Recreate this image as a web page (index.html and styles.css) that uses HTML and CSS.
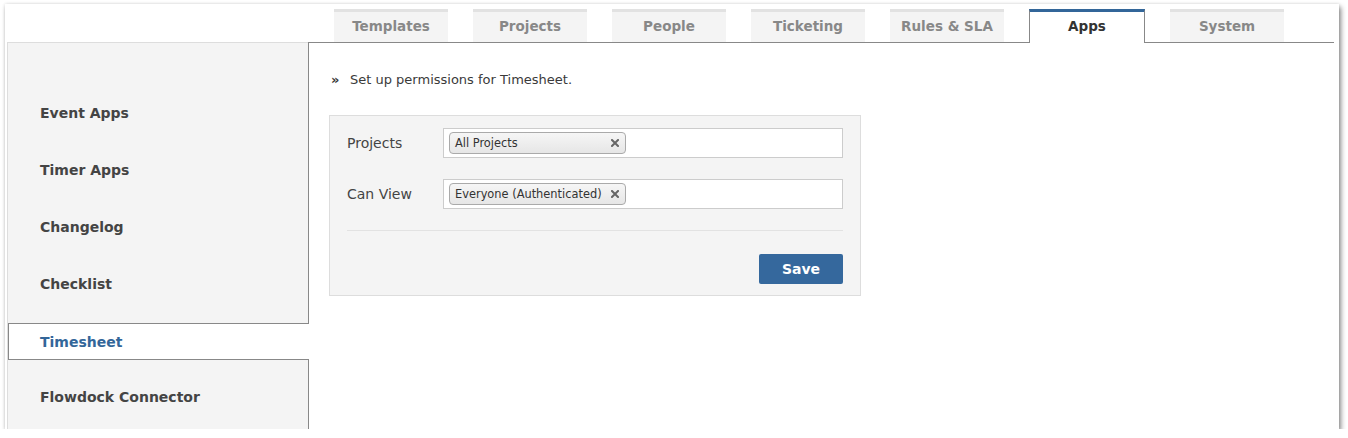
FILE: index.html
```html
<!DOCTYPE html>
<html lang="en">
<head>
<meta charset="utf-8">
<title>Apps - Timesheet</title>
<link rel="stylesheet" href="styles.css">
</head>
<body>
<div class="frame">
  <nav class="tabs">
    <div class="tab">Templates</div>
    <div class="tab">Projects</div>
    <div class="tab">People</div>
    <div class="tab">Ticketing</div>
    <div class="tab">Rules &amp; SLA</div>
    <div class="tab active">Apps</div>
    <div class="tab">System</div>
  </nav>
  <div class="main">
    <aside class="sidebar">
      <div class="side-item">Event Apps</div>
      <div class="side-item">Timer Apps</div>
      <div class="side-item">Changelog</div>
      <div class="side-item">Checklist</div>
      <div class="side-item active">Timesheet</div>
      <div class="side-item">Flowdock Connector</div>
    </aside>
    <section class="content">
      <p class="intro"><span class="raquo">»</span>Set up permissions for Timesheet.</p>
      <div class="panel">
        <div class="row">
          <label class="label">Projects</label>
          <div class="input">
            <span class="tag">All Projects<svg class="x" width="8" height="8" viewBox="0 0 8 8"><path d="M1 1L7 7M7 1L1 7" stroke="#666" stroke-width="2" stroke-linecap="square"/></svg></span>
          </div>
        </div>
        <div class="row">
          <label class="label">Can View</label>
          <div class="input">
            <span class="tag">Everyone (Authenticated)<svg class="x" width="8" height="8" viewBox="0 0 8 8"><path d="M1 1L7 7M7 1L1 7" stroke="#666" stroke-width="2" stroke-linecap="square"/></svg></span>
          </div>
        </div>
        <div class="divider"></div>
        <div class="actions">
          <button class="btn">Save</button>
        </div>
      </div>
    </section>
  </div>
</div>
</body>
</html>
```
FILE: styles.css
```css
* { box-sizing: border-box; }

body {
  margin: 0;
  background: #fff;
  font-family: "DejaVu Sans", Verdana, sans-serif;
}

.frame {
  margin: 4px 0 0 5px;
  width: 1334px;
  height: 425px;
  background: #fff;
  box-shadow: 2px 3px 5px rgba(0, 0, 0, 0.45), 0 0 3px rgba(0, 0, 0, 0.12);
  display: flex;
  flex-direction: column;
}

.tabs {
  display: flex;
  gap: 25px;
  height: 38px;
  padding: 5px 0 0 329px;
  align-items: flex-start;
}

.tab {
  width: 114px;
  height: 33px;
  border-top: 3px solid #e2e2e2;
  background: #f4f4f4;
  color: #888;
  font-weight: bold;
  font-size: 13.5px;
  line-height: 29px;
  text-align: center;
}

.tab.active {
  width: 116px;
  height: 34px;
  border-top-color: #336699;
  border-left: 1px solid #888;
  border-right: 1px solid #888;
  background: #fff;
  color: #333;
  position: relative;
  z-index: 1;
}

.main {
  display: flex;
  flex: 1;
  padding-left: 2px;
}

.sidebar {
  width: 301px;
  border-left: 1px solid #ddd;
  border-top: 1px solid #ddd;
  background: #f4f4f4;
  padding-top: 42px;
}

.side-item {
  height: 57px;
  line-height: 57px;
  padding-left: 32px;
  font-weight: bold;
  font-size: 14px;
  color: #444;
  white-space: nowrap;
}

.side-item.active {
  height: 37px;
  line-height: 33px;
  padding-top: 2px;
  padding-left: 31px;
  margin: 10px -1px 9px 0;
  border: 1px solid #888;
  border-right: none;
  background: #fff;
  color: #336699;
  position: relative;
  z-index: 1;
}

.content {
  width: 1026px;
  border-left: 1px solid #888;
  border-top: 1px solid #888;
  padding: 28px 20px 20px;
}

.intro {
  margin: 0;
  padding-left: 2px;
  font-size: 13px;
  line-height: 18px;
  color: #3a3a3a;
}

.raquo {
  display: inline-block;
  width: 19px;
  font-weight: bold;
}

.panel {
  margin-top: 26px;
  width: 532px;
  border: 1px solid #ddd;
  background: #f4f4f4;
  padding: 12px 17px 11px 17px;
}

.row {
  display: flex;
  align-items: center;
  height: 30px;
  margin-bottom: 21px;
}

.label {
  width: 96px;
  font-size: 14px;
  color: #444;
}

.input {
  width: 400px;
  height: 30px;
  border: 1px solid #ccc;
  background: #fff;
  padding: 3px 5px;
}

.tag {
  display: flex;
  align-items: center;
  width: 177px;
  height: 22px;
  border: 1px solid #aaa;
  border-radius: 4px;
  background: linear-gradient(#f6f6f6, #e6e6e6);
  padding-left: 5px;
  font-size: 11.4px;
  color: #333;
  white-space: nowrap;
}

.x {
  margin-left: auto;
  margin-right: 6px;
  flex: none;
}

.divider {
  border-top: 1px solid #e2e2e2;
  margin-bottom: 23px;
}

.actions {
  display: flex;
  justify-content: flex-end;
}

.btn {
  width: 84px;
  height: 30px;
  border: none;
  border-radius: 2px;
  background: #35689d;
  color: #fff;
  font-family: "DejaVu Sans", Verdana, sans-serif;
  font-weight: bold;
  font-size: 14px;
  padding: 0;
}
```
